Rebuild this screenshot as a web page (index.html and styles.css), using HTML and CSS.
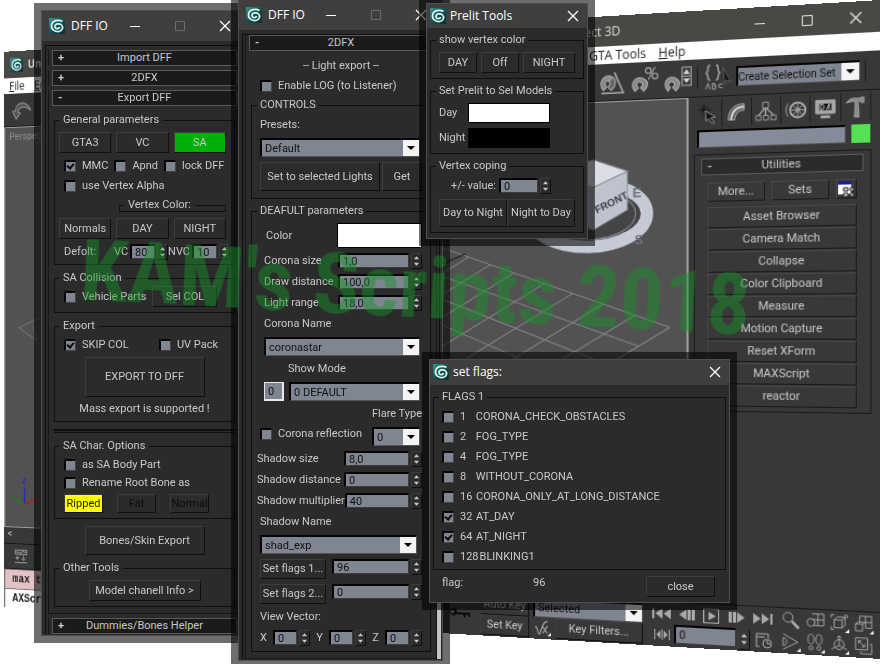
FILE: index.html
```
<!DOCTYPE html>
<html lang="en">
  <head>
    <meta charset="UTF-8" />
    <meta name="viewport" content="width=device-width, initial-scale=1.0" />
    <title>KAM's Scripts 2018</title>
    <link rel="stylesheet" href="styles.css">
  </head>
  <body>
    <!-- shared icons -->
    <svg class="defs" width="0" height="0">
      <linearGradient id="teal" x1="0" y1="0" x2="1" y2="1">
        <stop offset="0" stop-color="#2f9c9a" />
        <stop offset="0.5" stop-color="#12514f" />
        <stop offset="1" stop-color="#0a2e30" />
      </linearGradient>
      <symbol id="logo" viewBox="0 0 16 16">
        <rect width="16" height="16" rx="1" fill="url(#teal)" />
        <path d="M13.500 3.500C10 1.500 3 2 2.500 7.500c-.3 4.500 4 6.500 7.500 6 3.500-.6 4.500-4.500 2.500-6.500C10.500 5 6 5.500 6 8.500c0 2.500 4 3 4.500.5" fill="none" stroke="#dff3f1" stroke-width="1.700" />
      </symbol>
      <symbol id="min" viewBox="0 0 12 12"><path d="M1 6.500h10" stroke="currentColor" fill="none" /></symbol>
      <symbol id="max" viewBox="0 0 12 12"><path d="M1.500 1.500h9v9h-9z" stroke="currentColor" fill="none" /></symbol>
      <symbol id="close" viewBox="0 0 12 12"><path d="M1 1l10 10M11 1L1 11" stroke="currentColor" stroke-width="1.300" fill="none" /></symbol>
      <symbol id="updown" viewBox="0 0 10 16"><path d="M5 2.500L8 6H2zM5 13.500L8 10H2z" fill="#c9c9c9" /></symbol>
    </svg>

    <div class="desktop">
      <!-- 3ds max main window -->
      <div class="max-window">
        <div class="max-title">
          <svg class="logo"><use href="#logo" /></svg>
          <b>Unt</b>
          <span class="max-driver">Direct 3D</span>
          <div class="max-controls">
            <button type="button" aria-label="Minimize"><svg><use href="#min" /></svg></button>
            <button type="button" aria-label="Maximize"><svg><use href="#max" /></svg></button>
            <button type="button" aria-label="Close"><svg><use href="#close" /></svg></button>
          </div>
        </div>
        <nav class="max-menu">
          <a href="#"><u>F</u>ile</a>
          <a href="#"><u>E</u>dit</a>
          <a class="push" href="#">GTA Tools</a>
          <a href="#"><u>H</u>elp</a>
        </nav>
        <div class="max-toolbar">
          <svg class="tool" viewBox="0 0 26 26"><path d="M2 14l4 8 5-6-3-1c1-5 9-7 15-1C20 4 6 3 5 14z" fill="#555" stroke="#999" /></svg>
          <svg class="tool push" viewBox="0 0 26 26" fill="none" stroke="#aaa">
            <path d="M5 20C-1 13 6 4 13 8l-3 4c-3-2-5 2-2 5z" fill="#888" />
            <path d="M13 8c5 3 3 9-1 12l-3-3c2-2 3-4 1-5z" fill="#666" />
            <path d="M3 22.500h20L15 4" stroke-width="1.500" />
          </svg>
          <svg class="tool" viewBox="0 0 26 26" fill="none" stroke="#aaa">
            <path d="M4 22C-2 15 5 7 12 11c5 3 4 7 0 11l-3-3c3-3 2-4 0-5-3-1-5 2-2 5z" fill="#888" />
            <circle cx="16" cy="4" r="2.500" /><circle cx="22" cy="9" r="2.500" /><path d="M22 1l-6 11" />
          </svg>
          <svg class="tool" viewBox="0 0 26 26" fill="none" stroke="#aaa">
            <path d="M4 23C-2 16 4 8 11 12c5 3 4 7 0 11l-3-3c3-3 2-4 0-5-3-1-5 2-2 5z" fill="#888" />
            <path d="M16.500 2.500h8v16h-8zM16 10.500h9" /><path d="M20.500 4.500l3 4h-6zM20.500 16.500l3-4h-6z" fill="#ddd" stroke="none" />
          </svg>
          <span class="tool-line"></span>
          <svg class="tool" viewBox="0 0 26 26" fill="none" stroke="#999">
            <path d="M7 2C3 2 7 8 3 9c4 0 0 6 4 6M12 2c4 0 0 6 4 7-4 0 0 6-4 6" stroke-width="1.500" />
            <path d="M18 4l7 13-4-1-1 3z" fill="#111" stroke="#555" />
            <path d="M3 23l2-5 2 5M9 18v5h2c2-1 1-2 0-3 1 0 1-2-2-2M18 19c-4-2-5 4 0 3" />
          </svg>
          <span class="combo set-combo">
            <select aria-label="Named selection sets"><option>Create Selection Set</option></select>
          </span>
          <span class="tool-line"></span>
        </div>

        <div class="max-main">
          <div class="max-left">
            <svg class="viewport" viewBox="0 0 744 433" preserveAspectRatio="none" fill="none">
              <rect width="744" height="433" fill="#525252" />
              <!-- ground grid -->
              <path d="M440 117L728 217M440 145L698 235M440 166L668 253M440 190L637 271M440 216L600 293M440 243L575 308M440 272L545 326M728 217L500 353M695 205L440 357M664 194L440 327M633 184L440 298M605 174L440 271M575 163L440 242M550 155L440 219M528 147L440 198" stroke="#858585" />
              <path d="M500 154l24-10" stroke="#111" />
              <path d="M17 217l26-11M17 217l22 14-4-16" stroke="#777" />
              <!-- axis tripod -->
              <path d="M24 409V390" stroke="#2b2bb8" stroke-width="2" />
              <path d="M24 409L8 400" stroke="#267a26" stroke-width="2" />
              <path d="M24 409l18-9" stroke="#a02525" stroke-width="2" />
              <text x="21" y="386" fill="#2b2bb8" class="axis">z</text>
              <!-- view cube -->
              <ellipse cx="648" cy="108" rx="58" ry="31" fill="#444" stroke="#c6cad6" stroke-width="12" />
              <ellipse cx="648" cy="108" rx="47" ry="24" stroke="#8b8f9a" />
              <text x="692" y="92" class="compass">E</text>
              <text x="694" y="137" class="compass">S</text>
              <path d="M612 66l41-11 34 12-34 15z" fill="#dcdee6" stroke="#999" />
              <path d="M653 82l34-15v37l-34 19z" fill="#bfc3cf" stroke="#8d919c" />
              <path d="M612 66l41 16v41l-40-18z" fill="#a3a7b3" />
              <text x="657" y="107" transform="rotate(-25 657 107)" class="cube-face">FRONT</text>
            </svg>
            <span class="view-name">Perspective</span>
            <div class="max-slider"><span>&lt;</span></div>
            <div class="max-track">
              <svg viewBox="0 0 20 20" fill="none" stroke="#b5b5b5">
                <path d="M1.500 2.500h16v5h-16zM3 5h3l3 1 3-2 4 1M1 17.500h17M2 12h5M4.500 9.500v5M13 9v5M10 12l3 3 3-3" />
              </svg>
            </div>
          </div>

          <!-- command panel -->
          <aside class="command">
            <div class="tabs">
              <button type="button" aria-label="Create"><svg viewBox="0 0 24 24"><path d="M8 2v13M2 8h13M4 4l9 9M12 4l-8 8" stroke="#111" /><path d="M9 9l11 7-5 1 4 5-3 1-3-5-3 2z" fill="#151515" stroke="#999" /></svg></button>
              <button type="button" aria-label="Modify"><svg viewBox="0 0 24 24" fill="none" stroke="#aaa"><path d="M3 20C3 9 9 3 20 3v7C14 10 11 13 10 20z" fill="#666" /><path d="M6 20C7 11 12 6 20 6" stroke="#ddd" stroke-width="2" /></svg></button>
              <button type="button" aria-label="Hierarchy"><svg viewBox="0 0 24 24" fill="none" stroke="#aaa"><path d="M9 2.500h6v6H9zM2 16.500h5v5H2zM10 16.500h5v5h-5zM18 16.500h5v5h-5z" fill="#333" /><path d="M12 9v7M11 9l-6 7M13 9l7 7" stroke-width="1.500" /></svg></button>
              <button type="button" aria-label="Motion"><svg viewBox="0 0 24 24" fill="none" stroke="#aaa"><circle cx="14" cy="12" r="8" stroke-width="2" /><circle cx="14" cy="12" r="2" /><path d="M14 5v14M7 12h14M9 7l10 10M19 7L9 17M4 5c-3 4-3 10 0 14" /></svg></button>
              <button type="button" aria-label="Display"><svg viewBox="0 0 24 24" fill="none" stroke="#aaa"><path d="M2 3h20v14H2z" fill="#aaa" /><path d="M5 6h14v8H5z" fill="#111" /><path d="M7 13V7h2c2 2 2 4 0 6zM13 13l3-6v6" stroke="#ddd" /><path d="M7 20.500h10" stroke-width="3" /></svg></button>
              <button type="button" aria-label="Utilities"><svg viewBox="0 0 24 24"><path d="M3 7c2-4 5-5 8-5h6l1-1h3v6h-3l-1-2h-2l1 17h-5l1-16C8 5 6 6 3 7z" fill="#8a8a8a" stroke="#ccc" stroke-width=".5" /></svg></button>
            </div>
            <div class="object-name">
              <input type="text" aria-label="Object name" />
              <span class="object-color"></span>
            </div>
            <div class="utilities">
              <button class="rollup" type="button"><i>-</i>Utilities</button>
              <div class="util-list">
                <div class="util-top">
                  <button class="btn" type="button">More...</button>
                  <button class="btn" type="button">Sets</button>
                  <button class="btn btn-config" type="button" aria-label="Configure button sets">
                    <svg viewBox="0 0 16 16"><path d="M1 1h12v12H1z" fill="#fff" /><path d="M1 1h12v3H1z" fill="#1c1c9c" /><path d="M6 7h4v3H6zM12 7h3v3h-3zM6 12h4v3H6zM12 12h3v3h-3z" fill="#ddd" stroke="#222" /></svg>
                  </button>
                </div>
                <button class="btn" type="button">Asset Browser</button>
                <button class="btn" type="button">Camera Match</button>
                <button class="btn" type="button">Collapse</button>
                <button class="btn" type="button">Color Clipboard</button>
                <button class="btn" type="button">Measure</button>
                <button class="btn" type="button">Motion Capture</button>
                <button class="btn" type="button">Reset XForm</button>
                <button class="btn" type="button">MAXScript</button>
                <button class="btn" type="button">reactor</button>
              </div>
            </div>
          </aside>
        </div>

        <div class="max-status">
          <div class="listener">
            <div class="pink">max t</div>
            <div>AXScr</div>
          </div>
          <svg class="key" viewBox="0 0 30 20"><path d="M4 9a4 4 0 1 1 8 0h14v5h-3v-2h-2v3h-3v-3h-7a4 4 0 0 1-7-3z" fill="#0c0c0c" stroke="#555" stroke-width=".5" /><circle cx="7" cy="9" r="1.500" fill="#555" /></svg>
          <div class="key-buttons">
            <button class="btn" type="button">Auto Key</button>
            <button class="btn" type="button">Set Key</button>
          </div>
          <div class="key-filter">
            <span class="combo"><select aria-label="Key set"><option>Selected</option></select></span>
            <div>
              <svg viewBox="0 0 20 20" fill="none" stroke="#999"><path d="M2 10c3-3 3 7 5 7S9 3 16 3M10 8l6 8M16 8l-5 8" stroke-width="1.500" /><path d="M20 15v4h-4z" fill="#eee" stroke="none" /></svg>
              <button class="btn" type="button">Key Filters...</button>
            </div>
          </div>
          <div class="transport">
            <div>
              <button type="button" aria-label="Go to start"><svg viewBox="0 0 20 16"><path d="M1 3h2v10H1zM11 3v10L4 8zM19 3v10l-7-5z" /></svg></button>
              <button type="button" aria-label="Previous frame"><svg viewBox="0 0 20 16"><path d="M10 3v10L3 8zM11 3h3v10h-3zM15 3h3v10h-3z" /></svg></button>
              <button type="button" aria-label="Play"><svg viewBox="0 0 20 16"><path d="M2 1h15v14H2zM3 2v12h13V2z" fill-rule="evenodd" /><path d="M7 4l7 4-7 4z" /></svg></button>
              <button type="button" aria-label="Next frame"><svg viewBox="0 0 20 16"><path d="M10 3v10l7-5zM2 3h3v10H2zM6 3h3v10H6z" /></svg></button>
              <button type="button" aria-label="Go to end"><svg viewBox="0 0 20 16"><path d="M1 3v10l7-5zM9 3v10l7-5zM17 3h2v10h-2z" /></svg></button>
            </div>
            <div>
              <button type="button" aria-label="Key mode"><svg viewBox="0 0 20 16"><path d="M3 3h1v10H3zM9 4v8L5 8zM10 3h1v10h-1zM12 4v8l4-4zM17 3h1v10h-1z" /></svg></button>
              <span class="spin frame"><input type="text" value="0" aria-label="Frame" /><button type="button" aria-label="Step frame"><svg><use href="#updown" /></svg></button></span>
              <button type="button" aria-label="Time configuration"><svg viewBox="0 0 20 16" class="line"><path d="M4 14V2h11v4M4 5h8M7 14H4" /><circle cx="14" cy="11" r="4" /><path d="M14 8v3h3" /></svg></button>
            </div>
          </div>
          <div class="nav-icons">
            <button type="button" aria-label="Zoom"><svg viewBox="0 0 20 20"><circle cx="7" cy="7" r="5" /><path d="M11 11l7 7" stroke-width="3" /></svg></button>
            <button type="button" aria-label="Zoom all"><svg viewBox="0 0 20 20"><path d="M7 2h12v12H9M13 2v12M7 8h12" /><circle cx="6" cy="11" r="4" /></svg></button>
            <button type="button" aria-label="Zoom extents"><svg viewBox="0 0 20 20"><path d="M2 5V2h3M15 2h3v3M2 14v3h3M5 7h8v8H5zM5 7l3-3h8l-3 3M16 4v8l-3 3" /><path d="M20 16v4h-4z" class="corner" /></svg></button>
            <button type="button" aria-label="Zoom extents all"><svg viewBox="0 0 20 20"><path d="M6 8V2h12v12h-6M12 2v12M12 8h6M2 10h7v7H2zM2 10l3-2h7l-3 2" /><path d="M20 16v4h-4z" class="corner" /></svg></button>
            <button type="button" aria-label="Field of view"><svg viewBox="0 0 20 20"><path d="M2 2l15 8-15 8M2 6c5 0 5 8 0 8z" /><path d="M20 16v4h-4z" class="corner" /></svg></button>
            <button type="button" aria-label="Walk"><svg viewBox="0 0 20 20"><ellipse cx="6" cy="6" rx="3" ry="5" /><ellipse cx="14" cy="6" rx="3" ry="5" /><circle cx="6" cy="15" r="2" /><circle cx="14" cy="15" r="2" /><path d="M20 16v4h-4z" class="corner" /></svg></button>
            <button type="button" aria-label="Orbit"><svg viewBox="0 0 20 20"><circle cx="10" cy="10" r="5" /><path d="M10 1v10l8 4M10 11l-8 4M8 3l2-2 2 2" /><path d="M20 16v4h-4z" class="corner" /></svg></button>
            <button type="button" aria-label="Maximize viewport"><svg viewBox="0 0 20 20"><path d="M2 2h12v12H2zM7 16v2h11V8h-2M5 5l6 6M5 8V5h3M11 8v3H8" /></svg></button>
          </div>
        </div>
      </div>

      <!-- export window -->
      <section class="window win-export">
        <header class="title">
          <svg class="logo"><use href="#logo" /></svg>
          <h2>DFF IO</h2>
          <button type="button" aria-label="Minimize"><svg><use href="#min" /></svg></button>
          <button type="button" aria-label="Maximize" disabled><svg><use href="#max" /></svg></button>
          <button type="button" aria-label="Close"><svg><use href="#close" /></svg></button>
        </header>
        <div class="rollouts">
          <div class="rollout"><button class="rollup" type="button"><i>+</i>Import DFF</button></div>
          <div class="rollout"><button class="rollup" type="button"><i>+</i>2DFX</button></div>
          <div class="rollout open">
            <button class="rollup" type="button"><i>-</i>Export DFF</button>
            <div class="rollout-body">
              <fieldset class="group">
                <legend>General parameters</legend>
                <div class="row thirds">
                  <button class="btn" type="button">GTA3</button>
                  <button class="btn" type="button">VC</button>
                  <button class="btn btn-green" type="button">SA</button>
                </div>
                <div class="row checks">
                  <label class="check"><input type="checkbox" checked />MMC</label>
                  <label class="check"><input type="checkbox" />Apnd</label>
                  <label class="check"><input type="checkbox" />lock DFF</label>
                </div>
                <div class="row checks">
                  <label class="check"><input type="checkbox" />use Vertex Alpha</label>
                </div>
                <fieldset class="group mini"><legend>Vertex Color:</legend></fieldset>
                <div class="row thirds">
                  <button class="btn" type="button">Normals</button>
                  <button class="btn" type="button">DAY</button>
                  <button class="btn" type="button">NIGHT</button>
                </div>
                <div class="row defolt">
                  <span>Defolt:</span>
                  <label for="vc">VC</label>
                  <span class="spin"><input id="vc" type="text" value="80" /><button type="button" aria-label="Step VC"><svg><use href="#updown" /></svg></button></span>
                  <label for="nvc">NVC</label>
                  <span class="spin"><input id="nvc" type="text" value="10" /><button type="button" aria-label="Step NVC"><svg><use href="#updown" /></svg></button></span>
                </div>
              </fieldset>

              <fieldset class="group collision">
                <legend>SA Collision</legend>
                <div class="row checks">
                  <label class="check"><input type="checkbox" />Vehicle Parts</label>
                  <button class="btn" type="button">Sel COL</button>
                </div>
              </fieldset>

              <fieldset class="group export">
                <legend>Export</legend>
                <div class="row checks spread">
                  <label class="check"><input type="checkbox" checked />SKIP COL</label>
                  <label class="check"><input type="checkbox" />UV Pack</label>
                </div>
                <button class="btn btn-wide btn-export" type="button">EXPORT TO DFF</button>
                <p class="note">Mass export is supported !</p>
              </fieldset>

              <div class="divider"></div>

              <fieldset class="group chars">
                <legend>SA Char. Options</legend>
                <div class="row checks"><label class="check"><input type="checkbox" />as SA Body Part</label></div>
                <div class="row checks"><label class="check"><input type="checkbox" />Rename Root Bone as</label></div>
                <div class="row bodies">
                  <button class="btn btn-yellow" type="button">Ripped</button>
                  <button class="btn" type="button" disabled>Fat</button>
                  <button class="btn" type="button" disabled>Normal</button>
                </div>
              </fieldset>

              <button class="btn btn-wide btn-bones" type="button">Bones/Skin Export</button>

              <fieldset class="group">
                <legend>Other Tools</legend>
                <button class="btn btn-info" type="button">Model chanell Info &gt;</button>
              </fieldset>
            </div>
          </div>
          <div class="rollout"><button class="rollup" type="button"><i>+</i>Dummies/Bones Helper</button></div>
        </div>
      </section>

      <!-- 2dfx window -->
      <section class="window win-2dfx">
        <header class="title">
          <svg class="logo"><use href="#logo" /></svg>
          <h2>DFF IO</h2>
          <button type="button" aria-label="Minimize"><svg><use href="#min" /></svg></button>
          <button type="button" aria-label="Maximize" disabled><svg><use href="#max" /></svg></button>
          <button type="button" aria-label="Close"><svg><use href="#close" /></svg></button>
        </header>
        <div class="rollouts">
          <div class="rollout open">
            <button class="rollup" type="button"><i>-</i>2DFX</button>
            <div class="rollout-body">
              <p class="note">-- Light export --</p>
              <div class="row log"><label class="check"><input type="checkbox" />Enable LOG (to Listener)</label></div>

              <fieldset class="group wide controls">
                <legend>CONTROLS</legend>
                <label class="caption" for="presets">Presets:</label>
                <span class="combo"><select id="presets"><option>Default</option></select></span>
                <div class="row presets">
                  <button class="btn grow" type="button">Set to selected Lights</button>
                  <button class="btn" type="button">Get</button>
                </div>
              </fieldset>

              <fieldset class="group wide">
                <legend>DEAFULT parameters</legend>
                <div class="row color"><span>Color</span><button class="swatch" type="button" aria-label="Color"></button></div>
                <div class="row field corona"><label for="csize">Corona size</label><span class="spin"><input id="csize" type="text" value="1,0" /><button type="button" aria-label="Step size"><svg><use href="#updown" /></svg></button></span></div>
                <div class="row field corona"><label for="cdraw">Draw distance</label><span class="spin"><input id="cdraw" type="text" value="100,0" /><button type="button" aria-label="Step distance"><svg><use href="#updown" /></svg></button></span></div>
                <div class="row field corona"><label for="crange">Light range</label><span class="spin"><input id="crange" type="text" value="18,0" /><button type="button" aria-label="Step range"><svg><use href="#updown" /></svg></button></span></div>
                <label class="caption indent" for="cname">Corona Name</label>
                <span class="combo indent"><select id="cname"><option>coronastar</option></select></span>
                <label class="caption show-mode" for="mode">Show Mode</label>
                <div class="row mode indent">
                  <input class="tiny" type="text" value="0" aria-label="Mode number" />
                  <span class="combo grow"><select id="mode"><option>0 DEFAULT</option></select></span>
                </div>
                <label class="caption right" for="flare">Flare Type</label>
                <div class="row flare">
                  <label class="check"><input type="checkbox" />Corona reflection</label>
                  <span class="combo"><select id="flare"><option>0</option></select></span>
                </div>
                <div class="row field shadow"><label for="ssize">Shadow size</label><span class="spin"><input id="ssize" type="text" value="8,0" /><button type="button" aria-label="Step size"><svg><use href="#updown" /></svg></button></span></div>
                <div class="row field shadow"><label for="sdist">Shadow distance</label><span class="spin"><input id="sdist" type="text" value="0" /><button type="button" aria-label="Step distance"><svg><use href="#updown" /></svg></button></span></div>
                <div class="row field shadow"><label for="smul">Shadow multiplier</label><span class="spin"><input id="smul" type="text" value="40" /><button type="button" aria-label="Step multiplier"><svg><use href="#updown" /></svg></button></span></div>
                <label class="caption" for="sname">Shadow Name</label>
                <span class="combo shadow-name"><select id="sname"><option>shad_exp</option></select></span>
                <div class="row flags"><button class="btn" type="button">Set flags 1...</button><span class="spin"><input type="text" value="96" aria-label="Flags 1" /><button type="button" aria-label="Step flags 1"><svg><use href="#updown" /></svg></button></span></div>
                <div class="row flags"><button class="btn" type="button">Set flags 2...</button><span class="spin"><input type="text" value="0" aria-label="Flags 2" /><button type="button" aria-label="Step flags 2"><svg><use href="#updown" /></svg></button></span></div>
                <span class="caption">View Vector:</span>
                <div class="row vector">
                  <label for="vx">X</label><span class="spin"><input id="vx" type="text" value="0" /><button type="button" aria-label="Step X"><svg><use href="#updown" /></svg></button></span>
                  <label for="vy">Y</label><span class="spin"><input id="vy" type="text" value="0" /><button type="button" aria-label="Step Y"><svg><use href="#updown" /></svg></button></span>
                  <label for="vz">Z</label><span class="spin"><input id="vz" type="text" value="0" /><button type="button" aria-label="Step Z"><svg><use href="#updown" /></svg></button></span>
                </div>
              </fieldset>
            </div>
          </div>
          <span class="thumb"></span>
        </div>
      </section>

      <!-- prelit window -->
      <section class="window dialog win-prelit">
        <header class="title">
          <svg class="logo"><use href="#logo" /></svg>
          <h2>Prelit Tools</h2>
          <button type="button" aria-label="Close"><svg><use href="#close" /></svg></button>
        </header>
        <div class="dialog-body">
          <fieldset class="group wide">
            <legend>show vertex color</legend>
            <div class="row vertex">
              <button class="btn" type="button">DAY</button>
              <button class="btn" type="button">Off</button>
              <button class="btn grow" type="button">NIGHT</button>
            </div>
          </fieldset>
          <fieldset class="group wide">
            <legend>Set Prelit to Sel Models</legend>
            <div class="row prelit"><span>Day</span><button class="swatch" type="button" aria-label="Day color"></button></div>
            <div class="row prelit"><span>Night</span><button class="swatch black" type="button" aria-label="Night color"></button></div>
          </fieldset>
          <fieldset class="group wide">
            <legend>Vertex coping</legend>
            <div class="row value"><label for="value">+/- value:</label><span class="spin"><input id="value" type="text" value="0" /><button type="button" aria-label="Step value"><svg><use href="#updown" /></svg></button></span></div>
            <div class="row copy">
              <button class="btn" type="button">Day to Night</button>
              <button class="btn" type="button">Night to Day</button>
            </div>
          </fieldset>
        </div>
      </section>

      <!-- flags window -->
      <section class="window dialog win-flags">
        <header class="title">
          <svg class="logo"><use href="#logo" /></svg>
          <h2>set flags:</h2>
          <button type="button" aria-label="Close"><svg><use href="#close" /></svg></button>
        </header>
        <div class="dialog-body">
          <fieldset class="group wide">
            <legend>FLAGS 1</legend>
            <label class="check"><input type="checkbox" /><span><b>1</b> CORONA_CHECK_OBSTACLES</span></label>
            <label class="check"><input type="checkbox" /><span><b>2</b> FOG_TYPE</span></label>
            <label class="check"><input type="checkbox" /><span><b>4</b> FOG_TYPE</span></label>
            <label class="check"><input type="checkbox" /><span><b>8</b> WITHOUT_CORONA</span></label>
            <label class="check"><input type="checkbox" /><span><b>16</b> CORONA_ONLY_AT_LONG_DISTANCE</span></label>
            <label class="check"><input type="checkbox" checked /><span><b>32</b> AT_DAY</span></label>
            <label class="check"><input type="checkbox" checked /><span><b>64</b> AT_NIGHT</span></label>
            <label class="check"><input type="checkbox" /><span><b>128</b>BLINKING1</span></label>
          </fieldset>
          <div class="flags-footer">
            <span>flag:</span>
            <output>96</output>
            <button class="btn" type="button">close</button>
          </div>
        </div>
      </section>

      <h1 class="watermark">KAM's Scripts 2018</h1>
    </div>
  </body>
</html>
```

FILE: styles.css
```
* {
  margin: 0;
  padding: 0;
  box-sizing: border-box;
}

:root {
  --panel: #2b2b2b;
  --dark: #0f0f0f;
  --light: #3d3d3d;
  --text: #c9c9c9;
  --field: #7f8591;
}

body {
  background: #fff;
  color: var(--text);
  font: 11px/14px Roboto, 'Liberation Sans', sans-serif;
  overflow: hidden;
}

button,
input,
select {
  font: inherit;
  color: inherit;
  border: none;
  border-radius: 0;
  background: none;
  appearance: none;
}

fieldset {
  border: none;
  min-width: 0;
}

.defs {
  display: block;
}

.desktop {
  position: relative;
  width: 100%;
  height: 100vh;
  overflow: hidden;
}

.logo {
  width: 16px;
  height: 16px;
  flex: none;
}

.grow {
  flex: 1;
}

/* windows */
.window {
  position: absolute;
  background: var(--panel);
  outline: 1px solid #4e4e4e;
  outline-offset: -1px;
  box-shadow: 0 0 0 7px rgba(0, 0, 0, 0.57);
  overflow: hidden;
}
.win-export {
  left: 41px;
  top: 10px;
  width: 206px;
}
.win-2dfx {
  left: 238px;
  top: -1px;
  width: 205px;
}
.win-prelit {
  left: 426px;
  top: 3px;
  width: 162px;
}
.win-flags {
  left: 429px;
  top: 359px;
  width: 301px;
}

.title {
  display: flex;
  align-items: center;
  height: 31px;
  padding-left: 8px;
  background: #403f3d;
  color: #fff;
}
.title h2 {
  flex: 1;
  margin-left: 6px;
  font: 12px/16px 'Open Sans', 'Noto Sans', sans-serif;
  white-space: nowrap;
}
.title button {
  width: 45px;
  height: 100%;
}
.title button:disabled {
  color: #6a6a6a;
}
.title button svg,
.max-controls svg {
  width: 12px;
  height: 12px;
  vertical-align: middle;
}
.dialog .title {
  height: 25px;
  padding-left: 4px;
}
.dialog .title h2 {
  margin-left: 4px;
}
.dialog .title button {
  width: 30px;
}
.dialog-body {
  padding: 6px 4px;
  display: flex;
  flex-direction: column;
  gap: 6px;
}

/* rollouts */
.rollouts {
  position: relative;
  margin: 4px 3px 0 4px;
  padding-top: 4px;
  border: 1px solid var(--dark);
  border-bottom: none;
}
.rollout {
  margin: 0 2px 4px;
  padding: 0 3px;
  border: 1px solid #161616;
  border-width: 0 1px;
}
.rollout.open {
  padding-bottom: 6px;
  border-bottom-width: 1px;
}
.rollup {
  position: relative;
  display: block;
  width: 100%;
  height: 16px;
  line-height: 14px;
  border: 1px solid #5a5a5a;
  background: #1b1b1b;
  text-align: center;
}
.rollup i {
  position: absolute;
  left: 5px;
  top: 0;
  font-style: normal;
  font-weight: bold;
}
.rollout-body {
  padding: 8px 2px 0;
  display: flex;
  flex-direction: column;
  gap: 7px;
}
.win-export .rollout:last-child {
  margin-bottom: 2px;
}
.win-2dfx .rollouts {
  padding-top: 0;
}
.win-2dfx .rollout-body {
  gap: 6px;
}
.win-2dfx .rollout.open {
  margin-bottom: 2px;
}
.thumb {
  position: absolute;
  right: -2px;
  bottom: 0;
  width: 4px;
  height: 56px;
  background: #c4c4c4;
}

/* groups */
.group {
  display: flex;
  flex-direction: column;
  gap: 6px;
  padding: 6px 4px 5px;
  border: 1px solid var(--dark);
}
.group legend {
  height: 12px;
  line-height: 12px;
  padding: 0 4px;
}
.group.wide {
  gap: 5px;
  padding: 6px 8px 5px;
}
.group.wide legend {
  padding: 0 3px;
  margin-left: -3px;
}
.group.mini {
  margin: 0 4px 0 60px;
  padding: 0;
  height: 13px;
}
.group.mini legend {
  margin-left: 4px;
}
.group.collision {
  padding-top: 2px;
}
.group.collision .btn {
  width: 65px;
}
.group.export {
  gap: 5px;
}
.group.chars {
  gap: 4px;
}

.row {
  display: flex;
  align-items: center;
  white-space: nowrap;
}
.thirds {
  gap: 5px;
  padding-right: 4px;
}
.thirds .btn {
  flex: 1;
}
.checks {
  gap: 6px;
  padding-left: 5px;
}
.spread {
  justify-content: space-between;
  padding-right: 12px;
}
.defolt {
  height: 14px;
  padding-left: 5px;
}
.defolt span:first-child {
  flex: 1;
}
.defolt .spin {
  width: 38px;
  margin-left: 2px;
}

/* controls */
.btn {
  height: 21px;
  border: 1px solid;
  border-color: var(--light) var(--dark) var(--dark) var(--light);
  text-align: center;
  white-space: nowrap;
}
.btn:disabled {
  color: #0d0d0d;
}
.btn-green {
  background: #00b10c;
}
.btn-yellow {
  background: #ff0;
  color: #111;
}
.btn-wide {
  width: 120px;
  align-self: center;
}
.btn-info {
  width: 112px;
  align-self: center;
}
.btn-export {
  height: 40px;
}
.btn-bones {
  height: 29px;
}
.bodies {
  gap: 14px;
  padding-left: 5px;
}
.bodies .btn {
  width: 39px;
  height: 19px;
  line-height: 17px;
  overflow: hidden;
}

.check {
  display: flex;
  align-items: center;
  height: 14px;
  white-space: nowrap;
}
.check input {
  position: relative;
  flex: none;
  width: 12px;
  height: 12px;
  margin-right: 6px;
  background: var(--field);
  border: 1px solid;
  border-color: #050505 #444 #444 #050505;
  border-width: 2px 1px 1px 2px;
}
.check input:checked::before {
  content: '';
  position: absolute;
  left: 2px;
  top: 0;
  width: 3px;
  height: 5px;
  border: solid #0a0a0a;
  border-width: 0 2px 2px 0;
  transform: rotate(40deg);
}

.spin {
  display: flex;
  gap: 2px;
  height: 16px;
}
.spin input,
.tiny {
  flex: 1;
  min-width: 0;
  width: 20px;
  height: 15px;
  padding-left: 3px;
  line-height: 12px;
  background: var(--field);
  color: #111;
  border: 1px solid;
  border-color: #050505 #3c3c3c #3c3c3c #050505;
  border-width: 2px 1px 1px 2px;
}
.spin button {
  width: 11px;
  height: 16px;
  border: 1px solid;
  border-color: var(--light) var(--dark) var(--dark) var(--light);
}
.spin svg {
  display: block;
  width: 9px;
  height: 14px;
}

.combo {
  position: relative;
  display: block;
  height: 19px;
  margin-right: 2px;
}
.combo select {
  display: block;
  width: 100%;
  height: 100%;
  padding: 0 18px 0 3px;
  line-height: 15px;
  background: var(--field);
  color: #111;
  border: 1px solid;
  border-color: #050505 #555 #555 #050505;
  border-width: 2px 1px 1px 2px;
}
.combo::before {
  content: '';
  position: absolute;
  right: 1px;
  top: 2px;
  bottom: 1px;
  width: 16px;
  background: #f4f4f4;
  pointer-events: none;
}
.combo::after {
  content: '';
  position: absolute;
  right: 5px;
  top: 8px;
  border: 4px solid transparent;
  border-top-color: #000;
  border-bottom: none;
  pointer-events: none;
}

.caption {
  height: 16px;
  line-height: 16px;
}
.note {
  text-align: center;
}
.divider {
  height: 4px;
  border: 1px solid var(--dark);
  border-width: 2px 0 1px 1px;
}

/* 2dfx form */
.log {
  padding-left: 9px;
}
.group.controls {
  padding-bottom: 7px;
}
.presets {
  gap: 2px;
}
.presets .btn {
  height: 29px;
}
.presets .btn:last-child {
  width: 40px;
}
.color {
  justify-content: space-between;
  padding-left: 6px;
}
.swatch {
  width: 85px;
  height: 25px;
  background: #fff;
  border: 1px solid #000;
}
.swatch.black {
  background: #000;
}
.field {
  justify-content: space-between;
}
.indent,
.corona {
  margin-left: 4px;
}
.corona .spin {
  width: 84px;
}
.show-mode {
  margin-left: 28px;
}
.caption.right {
  align-self: flex-end;
}
.mode {
  gap: 5px;
}
.mode .tiny {
  flex: none;
  height: 19px;
  border: 1px solid #e8e8e8;
  border-width: 1px 2px 2px 1px;
}
.flare {
  justify-content: space-between;
  align-items: flex-start;
}
.flare .combo {
  width: 48px;
}
.shadow {
  margin-left: -3px;
}
.shadow .spin {
  width: 78px;
}
.shadow-name {
  margin-right: 5px;
}
.flags {
  align-items: flex-start;
  justify-content: space-between;
}
.flags .btn {
  width: 66px;
  height: 20px;
  line-height: 18px;
}
.flags .spin {
  width: 90px;
}
.vector {
  justify-content: space-between;
}
.vector .spin {
  width: 37px;
}

/* prelit form */
.vertex {
  gap: 4px;
}
.vertex .btn {
  width: 38px;
}
.prelit .swatch {
  width: 82px;
  height: 20px;
}
.prelit span {
  width: 29px;
}
.value {
  padding-left: 12px;
  gap: 3px;
}
.value .spin {
  width: 52px;
}
.copy .btn {
  flex: 1;
  height: 28px;
}

/* flags form */
.win-flags .title {
  height: 26px;
}
.win-flags .wide {
  gap: 6px;
  padding-top: 7px;
}
.win-flags b {
  display: inline-block;
  min-width: 12px;
  margin-right: 1px;
  font-weight: normal;
}
.flags-footer {
  display: flex;
  padding: 0 11px 0 9px;
}
.flags-footer span {
  width: 91px;
}
.flags-footer output {
  flex: 1;
}
.flags-footer .btn {
  width: 69px;
}

/* main 3ds max window, turned away to the left */
.max-window {
  position: absolute;
  left: -58px;
  top: 28px;
  width: 930px;
  height: 603px;
  display: flex;
  flex-direction: column;
  background: #383838;
  transform: perspective(1858px) rotateY(-20deg);
}
.max-title {
  display: flex;
  align-items: center;
  height: 29px;
  padding: 0 4px 0 7px;
  background: #4a4845;
  color: #ddd;
  font: 12px/16px 'Open Sans', 'Noto Sans', sans-serif;
}
.max-title b {
  flex: 1;
  margin-left: 6px;
}
.max-driver {
  margin-right: 111px;
}
.max-controls button {
  width: 44px;
  height: 29px;
}
.max-controls {
  display: flex;
}
.max-menu {
  display: flex;
  align-items: center;
  gap: 12px;
  height: 17px;
  padding: 0 184px 0 6px;
  background: #fff;
  font: 12px/16px 'Open Sans', 'Noto Sans', sans-serif;
}
.max-menu a {
  color: #222;
  text-decoration: none;
}
.push {
  margin-left: auto;
}
.max-toolbar {
  display: flex;
  align-items: center;
  gap: 4px;
  height: 36px;
  padding: 0 17px 0 8px;
  border-bottom: 1px solid #1a1a1a;
}
.tool {
  width: 28px;
  height: 28px;
}
.tool-line {
  width: 1px;
  height: 20px;
  background: #1c1c1c;
}
.set-combo {
  width: 114px;
  margin: 0;
}
.set-combo select {
  padding: 0;
  font-size: 10px;
}

.max-main {
  flex: 1;
  display: flex;
  min-height: 0;
}
.max-left {
  position: relative;
  flex: 1;
  display: flex;
  flex-direction: column;
}
.viewport {
  flex: 1;
  width: 100%;
  min-height: 0;
  border: solid #a0a0a0;
  border-width: 1px 2px 1px 1px;
}
.view-name {
  position: absolute;
  left: 6px;
  top: 4px;
  color: #8e8e8e;
}
.axis {
  font: bold 11px 'Liberation Sans', sans-serif;
}
.compass {
  font: bold 13px 'Liberation Sans', sans-serif;
  fill: #6d717b;
}
.cube-face {
  font: bold 10px 'Liberation Sans', sans-serif;
  fill: #3d3f46;
}
.max-slider {
  height: 18px;
  padding-left: 4px;
  border-bottom: 1px solid #161616;
}
.max-track {
  height: 26px;
  padding: 3px 12px;
}
.max-track svg {
  width: 18px;
  height: 20px;
}

.command {
  width: 181px;
  padding: 2px 12px 0 5px;
}
.tabs {
  display: flex;
  height: 26px;
}
.tabs button {
  flex: 1;
  border-right: 1px solid #1f1f1f;
}
.tabs svg {
  width: 21px;
  height: 21px;
  vertical-align: middle;
}
.object-name {
  display: flex;
  gap: 5px;
  margin: 3px 1px 6px 3px;
}
.object-name input {
  flex: 1;
  min-width: 0;
  height: 17px;
  background: #858b98;
  border: 1px solid;
  border-color: #050505 #555 #555 #050505;
  border-width: 2px 1px 1px 2px;
}
.object-color {
  width: 17px;
  height: 17px;
  background: #55e055;
}
.utilities {
  padding: 3px 6px 4px;
  border: 1px solid #1a1a1a;
}
.utilities .rollup {
  background: #2b2b2b;
}
.util-list {
  display: flex;
  flex-direction: column;
  gap: 1px;
  padding: 7px 6px 0;
}
.util-list .btn {
  height: 20px;
  border-color: #484848 #1a1a1a #1a1a1a #484848;
}
.util-top {
  display: flex;
  gap: 6px;
  margin-bottom: 4px;
}
.util-top .btn {
  flex: 1;
  height: 18px;
}
.util-top .btn-config {
  flex: none;
  width: 19px;
}
.btn-config svg {
  display: block;
  width: 16px;
  height: 16px;
}

.max-status {
  display: flex;
  align-items: center;
  height: 43px;
  padding-right: 8px;
  border-top: 1px solid #1a1a1a;
}
.max-status button {
  height: 20px;
}
.listener {
  flex: 1;
  color: #222;
  font: bold 12px/20px 'Liberation Mono', monospace;
}
.listener div {
  width: 200px;
  padding-left: 9px;
  background: #fff;
  border: 1px solid #777;
  border-bottom: none;
}
.listener .pink {
  background: #e3c1c4;
}
.key {
  width: 30px;
  height: 20px;
  margin-right: 6px;
}
.key-buttons {
  display: flex;
  flex-direction: column;
  width: 50px;
}
.key-filter {
  width: 109px;
  margin: 0 6px 0 4px;
}
.key-filter .combo {
  margin: 0;
}
.key-filter div {
  display: flex;
  align-items: center;
  gap: 4px;
}
.key-filter div svg {
  width: 18px;
  height: 18px;
}
.key-filter .btn {
  flex: 1;
}
.transport {
  width: 120px;
  margin-right: 3px;
}
.transport > div {
  display: flex;
  height: 20px;
}
.transport > div > button {
  width: 24px;
}
.transport svg {
  width: 20px;
  height: 16px;
  fill: #aaa;
  vertical-align: middle;
}
.transport svg.line {
  fill: none;
  stroke: #aaa;
}
.transport .spin {
  flex: 1;
  height: 18px;
}
.transport .spin input {
  height: 18px;
}
.transport .spin svg {
  width: 9px;
}
.nav-icons {
  display: grid;
  grid-template-columns: repeat(4, 22px);
}
.nav-icons svg {
  width: 18px;
  height: 18px;
  fill: none;
  stroke: #aaa;
  vertical-align: middle;
}
.nav-icons .corner {
  fill: #fff;
  stroke: none;
}

.watermark {
  position: absolute;
  left: 80px;
  top: 238px;
  color: rgba(20, 145, 40, 0.46);
  font: bold 86px/100px 'Liberation Sans Narrow', 'Roboto Condensed', 'Liberation Sans', sans-serif;
  white-space: nowrap;
  pointer-events: none;
  transform: rotate(3deg);
}
```
